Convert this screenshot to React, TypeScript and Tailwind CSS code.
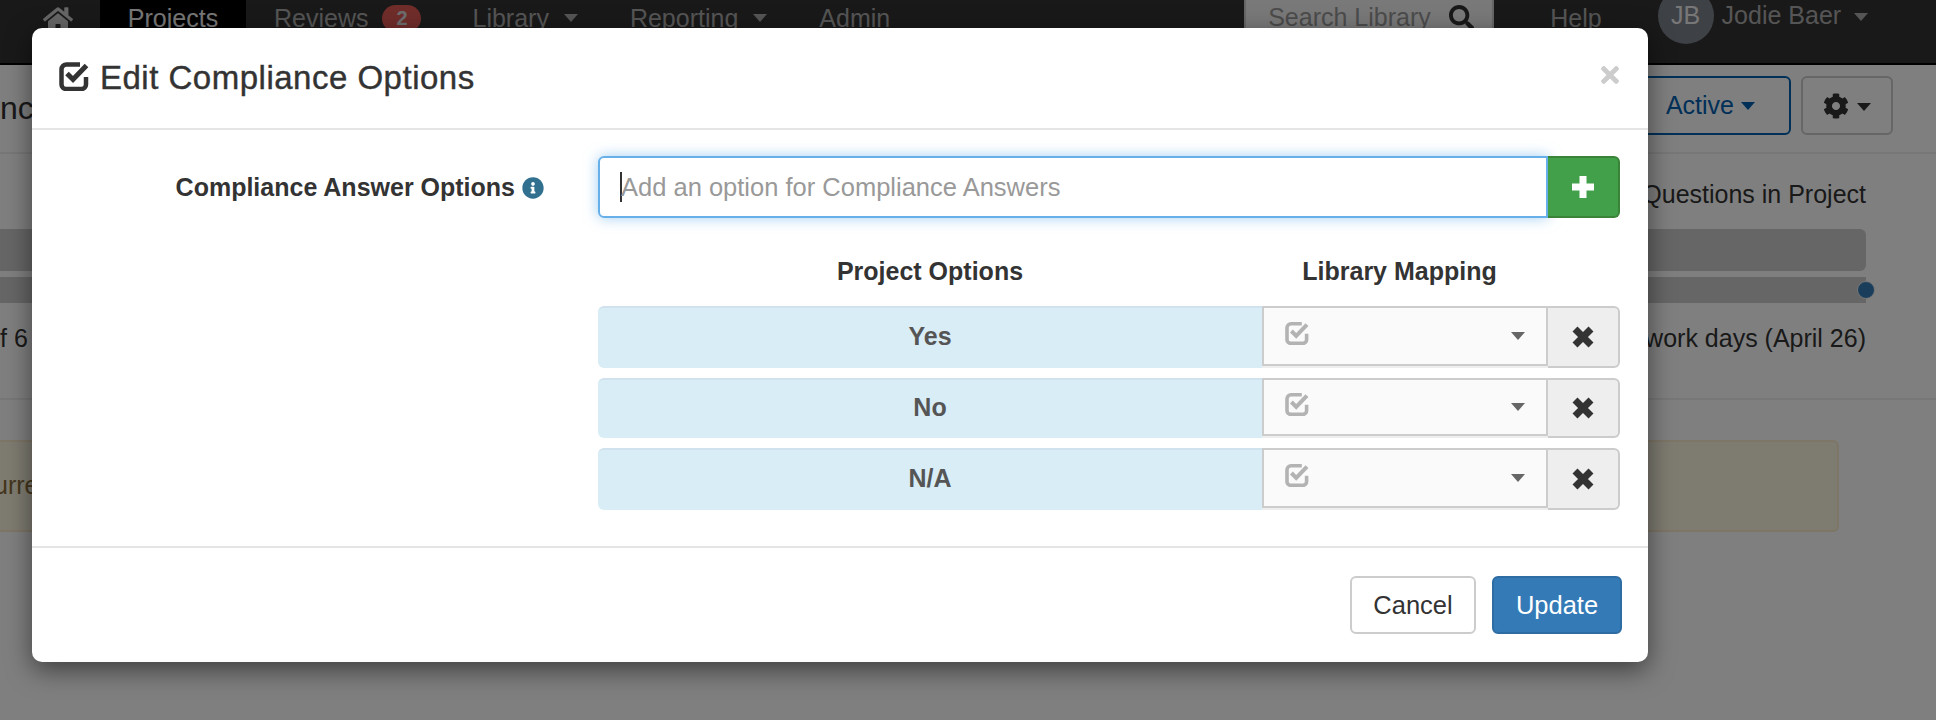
import React from "react";
import { FaCog, FaHome, FaInfoCircle, FaSearch, FaTimes } from "react-icons/fa";

function CheckIcon({ className }: { className: string }) {
  return (
    <svg viewBox="0 0 30 30" className={className} fill="none" stroke="currentColor">
      <path d="M21 3.500H7.500A5 5 0 0 0 2.500 8.500V23.500A4.500 4.500 0 0 0 7 28H22.500A4.500 4.500 0 0 0 27 23.500V16" strokeWidth="4.500" />
      <path d="M8 12.500L14 18.500L27.500 4.500" strokeWidth="5" />
    </svg>
  );
}

function Caret({ className }: { className: string }) {
  return <span className={`inline-block h-0 w-0 border-x-[7px] border-t-[8px] border-x-transparent ${className}`} />;
}

function RemoveIcon() {
  return (
    <svg viewBox="0 0 24 24" className="h-[24px] w-[24px]" fill="none" stroke="currentColor" strokeWidth="7">
      <path d="M4 4L20 20M20 4L4 20" />
    </svg>
  );
}

function PlusIcon() {
  return (
    <svg viewBox="0 0 24 24" className="h-[24px] w-[24px]" fill="none" stroke="currentColor" strokeWidth="7">
      <path d="M12 1V23M1 12H23" />
    </svg>
  );
}

function OptionRow({ label, tall }: { label: string; tall: boolean }) {
  return (
    <div className={`flex ${tall ? "h-[62px]" : "h-[60px]"}`}>
      <div className="flex w-[664px] items-center justify-center rounded-l-[6px] border-t-2 border-[#cfe2ee] bg-[#d9edf7] pb-[2px] text-[25px] font-bold text-[#555]">
        {label}
      </div>
      <div className="h-full w-[286px] bg-[#eee]">
        <div className={`flex ${tall ? "h-[60px]" : "h-[58px]"} items-center justify-between border-2 border-[#ccc] bg-[#fafafa] pl-[21px] pr-[21px]`}>
          <CheckIcon className="mb-[6px] h-[24px] w-[24px] text-[#b3b3b3]" />
          <Caret className="border-t-[#666]" />
        </div>
      </div>
      <div className="flex w-[72px] items-center justify-center rounded-r-[6px] border-2 border-l-0 border-[#ccc] bg-[#eee] text-[#333]">
        <RemoveIcon />
      </div>
    </div>
  );
}

function NavItem({ label, caret }: { label: string; caret?: boolean }) {
  return (
    <span className="flex items-center gap-[15px] text-[25px] text-[#aaa]">
      {label}
      {caret && <Caret className="border-t-[#aaa]" />}
    </span>
  );
}

export default function App() {
  return (
    <div className="relative h-[720px] w-[1936px] overflow-hidden bg-white font-['Liberation_Sans',Arial,sans-serif] text-[#333]">
      {/* Page behind the dialog */}
      <header className="flex h-[65px] border-b-2 border-black bg-[#333]">
        <div className="flex w-[100px] justify-end pr-[27px] pt-[4px] text-[#ccc]">
          <FaHome className="h-[30px] w-[30px]" />
        </div>
        <div className="flex w-[146px] justify-center bg-black pt-[3px] text-[25px] leading-[30px] text-[#eee]">Projects</div>
        <div className="ml-[28px] flex items-center gap-[14px] self-start pt-[3px] leading-[30px]">
          <NavItem label="Reviews" />
          <span className="flex h-[27px] w-[39px] items-center justify-center rounded-full bg-[#e05a55] text-[20px] font-bold text-[#ddd]">2</span>
        </div>
        <div className="ml-[51px] flex items-start gap-[52px] pt-[3px] leading-[30px]">
          <NavItem label="Library" caret />
          <NavItem label="Reporting" caret />
          <span className="text-[25px] text-[#aaa]">Admin</span>
        </div>
        <div className="ml-[354px] flex h-[34px] w-[250px] items-center justify-between border-x-2 border-b-2 border-[#ccc] bg-[#f2f2f2] pl-[22px] pr-[18px] pt-[3px] text-[25px] text-[#999]">
          <span>Search Library</span>
          <FaSearch className="h-[25px] w-[25px] text-[#333]" />
        </div>
        <span className="ml-[56px] pt-[3px] text-[25px] leading-[30px] text-[#aaa]">Help</span>
        <div className="ml-[56px] -mt-[12px] flex h-[56px] w-[56px] items-center justify-center rounded-full bg-[#7d838c] text-[25px] text-[#eee]">JB</div>
        <div className="ml-[8px] flex items-start gap-[13px] text-[25px] leading-[30px] text-[#aaa]">
          Jodie Baer
          <Caret className="mt-[13px] border-t-[#aaa]" />
        </div>
      </header>

      <section className="flex h-[89px] items-start justify-between border-b-2 border-[#eee] pr-[43px] pt-[11px]">
        <span className="pt-[14px] text-[32px] leading-[36px]">nc</span>
        <div className="flex gap-[10px]">
          <div className="flex h-[59px] w-[160px] items-center justify-end gap-[7px] rounded-[6px] border-2 border-[#0060b0] pr-[34px] text-[25px] text-[#0060b0]">
            Active
            <Caret className="border-t-[#0060b0]" />
          </div>
          <div className="flex h-[59px] w-[92px] items-center justify-center gap-[8px] rounded-[6px] border-2 border-[#ccc] text-[#333]">
            <FaCog className="h-[26px] w-[26px]" />
            <Caret className="mt-[3px] border-t-[#333]" />
          </div>
        </div>
      </section>

      <section className="h-[246px] border-b-2 border-[#eee] pr-[70px]">
        <div className="flex h-[75px] items-center justify-end pt-[6px] text-[25px]">Questions in Project</div>
        <div className="h-[42px] rounded-r-[6px] bg-[#ccc]" />
        <div className="relative mt-[6px] h-[26px] bg-[#ccc]">
          <span className="absolute -right-[9px] top-[4px] h-[18px] w-[18px] rounded-full border border-[#eee] bg-[#337ab7]" />
        </div>
        <div className="flex h-[70px] items-center justify-between pt-[2px] text-[25px]">
          <span className="whitespace-nowrap">f 6</span>
          <span>work days (April 26)</span>
        </div>
      </section>

      <section className="mr-[97px] mt-[40px] flex h-[92px] items-center rounded-r-[6px] border-2 border-l-0 border-[#faebcc] bg-[#fcf8e3] text-[25px] text-[#8a6d3b]">
        <span className="-ml-[6px] whitespace-nowrap">urrently</span>
      </section>

      {/* Backdrop */}
      <div className="absolute inset-0 bg-black/50" />

      {/* Dialog */}
      <div className="absolute left-[32px] top-[28px] h-[634px] w-[1616px] rounded-[10px] bg-white shadow-[0_8px_26px_rgba(0,0,0,0.5)]">
        <div className="flex h-[102px] items-center justify-between border-b-2 border-[#e5e5e5] px-[27px]">
          <h4 className="flex items-center gap-[11px] text-[33px] font-normal leading-[40px] tracking-[0.5px] [-webkit-text-stroke:0.4px_currentColor]">
            <CheckIcon className="mb-[4px] h-[30px] w-[30px] text-[#333]" />
            Edit Compliance Options
          </h4>
          <FaTimes className="mb-[6px] h-[26px] w-[22px] text-[#ccc]" />
        </div>

        <div className="h-[416px] pt-[26px]">
          <div className="flex">
            <div className="flex h-[62px] w-[566px] items-center justify-end gap-[7px] pr-[54px] pt-[2px] text-[25px] font-bold">
              Compliance Answer Options
              <FaInfoCircle className="h-[22px] w-[22px] text-[#31708f]" />
            </div>
            <div className="flex h-[62px] w-[1022px]">
              <div className="flex flex-1 items-center rounded-l-[6px] border-2 border-[#66afe9] pl-[20px] text-[25.5px] text-[#999] shadow-[0_0_14px_rgba(102,175,233,0.6)]">
                <span className="-mr-[1px] h-[30px] w-[2px] bg-[#333]" />
                Add an option for Compliance Answers
              </div>
              <div className="flex w-[72px] items-center justify-center rounded-r-[6px] border-2 border-l-0 border-[#398439] bg-[#43a04a] text-white">
                <PlusIcon />
              </div>
            </div>
          </div>

          <div className="ml-[566px] w-[1022px]">
            <div className="flex h-[88px] items-center pt-[20px] text-[25px] font-bold">
              <div className="w-[664px] text-center">Project Options</div>
              <div className="w-[275px] text-center">Library Mapping</div>
            </div>
            <div className="flex flex-col gap-[10px]">
              <OptionRow label="Yes" tall />
              <OptionRow label="No" tall={false} />
              <OptionRow label="N/A" tall />
            </div>
          </div>
        </div>

        <div className="flex h-[116px] items-start justify-end gap-[16px] border-t-2 border-[#e5e5e5] pr-[26px] pt-[28px] text-[25.5px]">
          <button className="h-[58px] w-[126px] rounded-[6px] border-2 border-[#ccc] bg-white text-[#333]">Cancel</button>
          <button className="h-[58px] w-[130px] rounded-[6px] border-2 border-[#2e6da4] bg-[#337ab7] text-white">Update</button>
        </div>
      </div>
    </div>
  );
}
